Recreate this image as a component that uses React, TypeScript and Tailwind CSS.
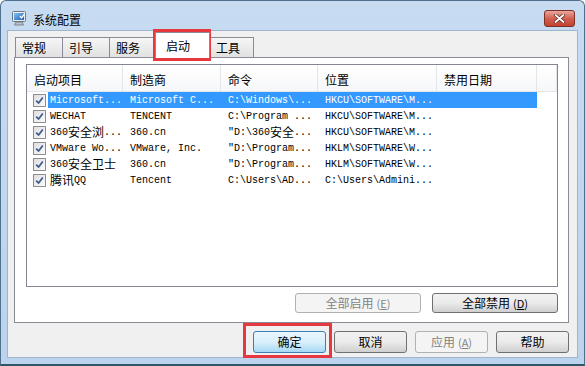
import React from 'react';

const rows: string[][] = [
  ['Microsoft...', 'Microsoft C...', 'C:\\Windows\\...', 'HKCU\\SOFTWARE\\M...'],
  ['WECHAT', 'TENCENT', 'C:\\Program ...', 'HKCU\\SOFTWARE\\M...'],
  ['360安全浏...', '360.cn', '"D:\\360安全...', 'HKCU\\SOFTWARE\\M...'],
  ['VMware Wo...', 'VMware, Inc.', '"D:\\Program...', 'HKLM\\SOFTWARE\\W...'],
  ['360安全卫士', '360.cn', '"D:\\Program...', 'HKLM\\SOFTWARE\\W...'],
  ['腾讯QQ', 'Tencent', 'C:\\Users\\AD...', 'C:\\Users\\Admini...'],
];

// SimSun-like: half width latin, full width CJK
function Mixed({ text }: { text: string }) {
  const parts = text.split(/([\u4e00-\u9fff]+)/).filter(Boolean);
  return (
    <>
      {parts.map((p, i) =>
        /[\u4e00-\u9fff]/.test(p) ? (
          <span key={i} className="text-[12px] font-['Noto_Sans_CJK_SC',sans-serif]">{p}</span>
        ) : (
          <span key={i}>{p}</span>
        )
      )}
    </>
  );
}

function CheckBox() {
  return (
    <span className="w-[13px] h-[13px] border border-[#8e8f8f] bg-linear-to-br from-[#dedede] to-[#fbfbfb] flex items-center justify-center shrink-0">
      <svg width="9" height="9" viewBox="0 0 9 9">
        <path d="M1.2 4.6 L3.6 7 L7.8 1.6" stroke="#3c5a8a" strokeWidth="1.7" fill="none" />
      </svg>
    </span>
  );
}

function Button({ label, hotkey, disabled, primary, className }: { label: string; hotkey?: string; disabled?: boolean; primary?: boolean; className: string }) {
  const base = disabled
    ? 'border-[#adb2b5] bg-[#f4f4f4] text-[#838383]'
    : primary
      ? 'border-[#3c7fb1] bg-linear-to-b from-[#eaf6fd] via-[#d9f0fc] to-[#a7d9f5] text-black'
      : 'border-[#707070] bg-linear-to-b from-[#f2f2f2] via-[#ebebeb] to-[#cfcfcf] text-black';
  return (
    <div className={`${className} ${base} border rounded-[3px] flex items-center justify-center text-[12px] leading-none`}>
      {label}
      {hotkey && (
        <span className="ml-[3px] text-[11px]">
          (<span className="underline">{hotkey}</span>)
        </span>
      )}
    </div>
  );
}

function Tab({ label, className }: { label: string; className: string }) {
  return (
    <div className={`${className} border border-b-0 border-[#898c95] bg-linear-to-b from-[#f6f6f6] to-[#e1e1e1] text-[12px] flex items-center pl-[6px] pt-px`}>
      {label}
    </div>
  );
}

export default function App() {
  const cols = ['w-[96px]', 'w-[98px]', 'w-[97px]', 'w-[119px]', 'w-[100px]'];
  const headers = ['启动项目', '制造商', '命令', '位置', '禁用日期'];

  return (
    <div className="relative w-[585px] h-[366px] overflow-hidden bg-white font-['Noto_Sans_CJK_SC',sans-serif] text-black">
      {/* Window frame */}
      <div className="w-full h-full flex flex-col rounded-t-[6px] border border-[#50708f] border-b-2 border-b-[#2f5566] bg-linear-to-b from-[#c7dbf1] to-[#bcd3ed]">
        {/* Title bar */}
        <div className="h-[29px] flex items-start shrink-0">
          <svg className="mt-[9px] ml-[10px]" width="17" height="17" viewBox="0 0 17 17">
            <defs>
              <linearGradient id="scr" x1="0" y1="0" x2="1" y2="1">
                <stop offset="0" stopColor="#7fc4f5" />
                <stop offset="1" stopColor="#1c5fb5" />
              </linearGradient>
            </defs>
            <rect x="1.5" y="1.5" width="13" height="10" rx="1" fill="#e9edf2" stroke="#6d7684" />
            <rect x="3" y="3" width="10" height="7" fill="url(#scr)" />
            <path d="M5 12 h6 l1.5 3 h-9 z" fill="#b9c0c9" stroke="#6d7684" strokeWidth="0.8" />
            <path d="M9 6 l1.5 2 l3 -4" stroke="#ffffff" strokeWidth="1.3" fill="none" />
          </svg>
          <span className="ml-[5px] mt-[10px] text-[12px] leading-[17px]">系统配置</span>
          <div className="ml-auto mr-[9px] mt-[9px] w-[31px] h-[17px] rounded-[3px] border border-[#7e2f26] bg-linear-to-b from-[#e8a89c] via-[#d0604f] to-[#c4402f] flex items-center justify-center">
            <svg width="11" height="9" viewBox="0 0 11 9">
              <path d="M1.5 1 L9.5 8 M9.5 1 L1.5 8" stroke="#5a1e16" strokeWidth="3.2" strokeLinecap="round" />
              <path d="M1.5 1 L9.5 8 M9.5 1 L1.5 8" stroke="#ffffff" strokeWidth="1.8" strokeLinecap="round" />
            </svg>
          </div>
        </div>

        {/* Client area */}
        <div className="ml-[6px] mr-[6px] h-[328px] border border-[#9fb4cf] bg-[#f0f0f0] flex flex-col">
          {/* Tabs */}
          <div className="h-[26px] pl-[7px] flex items-end shrink-0">
            <Tab label="常规" className="w-[48px] h-[20px]" />
            <Tab label="引导" className="w-[48px] h-[20px] -ml-px" />
            <Tab label="服务" className="w-[48px] h-[20px] -ml-px" />
            <div className="relative z-10 -ml-[2px] -mb-px w-[55px] h-[26px] border border-b-0 border-[#898c95] bg-white text-[12px] flex items-center pl-[10px]">
              启动
            </div>
            <Tab label="工具" className="w-[45px] h-[20px] -ml-px" />
          </div>

          {/* Tab panel */}
          <div className="ml-[6px] w-[555px] h-[266px] border border-[#898c95] bg-white pl-[11px] pt-[6px] flex flex-col shrink-0">
            {/* List view */}
            <div className="w-[532px] h-[223px] border border-[#828790] bg-white flex flex-col">
              <div className="h-[27px] flex bg-linear-to-b from-white to-[#f6f7f9] border-b border-[#e3e5e8] text-[12px]">
                {headers.map((h, i) => (
                  <div key={h} className={`${cols[i]} h-full flex items-center pl-[7px] pt-[3px] border-r border-[#e3e5e8]`}>
                    {h}
                  </div>
                ))}
                <div className="w-[20px] h-full border-r border-[#e3e5e8]" />
              </div>
              <div className="flex flex-col font-['Liberation_Mono',monospace] text-[10px]">
                {rows.map((r, ri) => {
                  const sel = ri === 0;
                  const cell = sel ? 'bg-[#3399ff] text-white' : '';
                  return (
                    <div key={ri} className="h-[16px] flex items-center whitespace-nowrap">
                      <div className={`${cols[0]} h-full flex items-center pl-[6px]`}>
                        <CheckBox />
                        <div className={`ml-[2px] flex-1 h-full flex items-center pl-[2px] ${cell}`}>
                          <Mixed text={r[0]} />
                        </div>
                      </div>
                      {[1, 2, 3].map((ci) => (
                        <div key={ci} className={`${cols[ci]} h-full flex items-center pl-[7px] ${cell}`}>
                          <Mixed text={r[ci]} />
                        </div>
                      ))}
                      <div className={`${cols[4]} h-full ${cell}`} />
                    </div>
                  );
                })}
              </div>
            </div>

            {/* Enable / disable all */}
            <div className="w-[532px] mt-[6px] flex justify-end gap-[11px]">
              <Button label="全部启用" hotkey="E" disabled className="w-[126px] h-[20px]" />
              <Button label="全部禁用" hotkey="D" className="w-[126px] h-[20px]" />
            </div>
          </div>

          {/* Dialog buttons */}
          <div className="mt-[8px] ml-[6px] w-[555px] flex justify-end gap-[8px]">
            <Button label="确定" primary className="w-[73px] h-[22px]" />
            <Button label="取消" className="w-[73px] h-[22px]" />
            <Button label="应用" hotkey="A" disabled className="w-[73px] h-[22px]" />
            <Button label="帮助" className="w-[73px] h-[22px]" />
          </div>
        </div>
      </div>

      {/* Red annotation boxes */}
      <div className="absolute left-[153px] top-[29px] w-[58px] h-[32px] border-[3px] border-[#e8383f]" />
      <div className="absolute left-[243px] top-[323px] w-[89px] h-[35px] border-[3px] border-[#e8383f]" />
    </div>
  );
}
